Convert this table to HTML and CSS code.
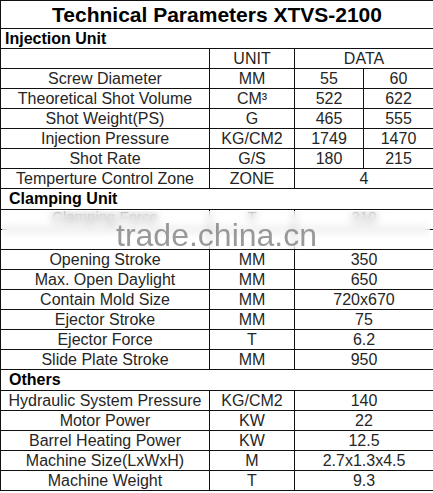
FILE: index.html
```html
<!DOCTYPE html>
<html>
<head>
<meta charset="utf-8">
<title>Technical Parameters XTVS-2100</title>
<link rel="stylesheet" href="styles.css">
</head>
<body>
<div class="sheet">
  <table class="spec">
    <colgroup>
      <col class="c-name">
      <col class="c-unit">
      <col class="c-d1">
      <col class="c-d2">
    </colgroup>
    <tbody>
      <tr class="r-title"><td colspan="4" class="title">Technical Parameters XTVS-2100</td></tr>
      <tr class="r-sec"><td colspan="4" class="sec sec-first">Injection Unit</td></tr>
      <tr><td></td><td>UNIT</td><td colspan="2">DATA</td></tr>
      <tr><td>Screw Diameter</td><td>MM</td><td>55</td><td>60</td></tr>
      <tr><td>Theoretical Shot Volume</td><td>CM³</td><td>522</td><td>622</td></tr>
      <tr><td>Shot Weight(PS)</td><td>G</td><td>465</td><td>555</td></tr>
      <tr><td>Injection Pressure</td><td>KG/CM2</td><td>1749</td><td>1470</td></tr>
      <tr><td>Shot Rate</td><td>G/S</td><td>180</td><td>215</td></tr>
      <tr><td>Temperture Control Zone</td><td>ZONE</td><td colspan="2">4</td></tr>
      <tr class="r-sec2"><td colspan="4" class="sec">Clamping Unit</td></tr>
      <tr class="r-hidden"><td>Clamping Force</td><td>T</td><td colspan="2">210</td></tr>
      <tr class="r-hidden"><td></td><td></td><td colspan="2"></td></tr>
      <tr><td>Opening Stroke</td><td>MM</td><td colspan="2">350</td></tr>
      <tr><td>Max. Open Daylight</td><td>MM</td><td colspan="2">650</td></tr>
      <tr><td>Contain Mold Size</td><td>MM</td><td colspan="2">720x670</td></tr>
      <tr><td>Ejector Stroke</td><td>MM</td><td colspan="2">75</td></tr>
      <tr><td>Ejector Force</td><td>T</td><td colspan="2">6.2</td></tr>
      <tr><td>Slide Plate Stroke</td><td>MM</td><td colspan="2">950</td></tr>
      <tr class="r-sec2"><td colspan="4" class="sec">Others</td></tr>
      <tr><td>Hydraulic System Pressure</td><td>KG/CM2</td><td colspan="2">140</td></tr>
      <tr><td>Motor Power</td><td>KW</td><td colspan="2">22</td></tr>
      <tr><td>Barrel Heating Power</td><td>KW</td><td colspan="2">12.5</td></tr>
      <tr><td>Machine Size(LxWxH)</td><td>M</td><td colspan="2">2.7x1.3x4.5</td></tr>
      <tr><td>Machine Weight</td><td>T</td><td colspan="2">9.3</td></tr>
    </tbody>
  </table>
  <div class="smudge"></div>
  <div class="watermark">trade.china.cn</div>
</div>
</body>
</html>
```

FILE: styles.css
```css
html, body {
  margin: 0;
  padding: 0;
  background: #ffffff;
}

.sheet {
  position: relative;
  width: 433px;
  height: 493px;
  overflow: hidden;
}

.spec {
  width: 433px;
  border-collapse: collapse;
  table-layout: fixed;
  font-family: "Liberation Sans", Arial, sans-serif;
  font-size: 16px;
  color: #262626;
}

.c-name { width: 209px; }
.c-unit { width: 85px; }
.c-d1 { width: 69px; }
.c-d2 { width: 70px; }

.spec td {
  border: 1px solid #111;
  height: 19px;
  padding: 0;
  text-align: center;
  vertical-align: middle;
  line-height: 18px;
  white-space: nowrap;
}

.spec .r-title td {
  height: 27px;
}

.spec td.title {
  font-size: 21px;
  font-weight: bold;
  color: #000;
  line-height: 26px;
}

.spec .r-sec2 td {
  height: 20px;
}

.spec td.sec {
  text-align: left;
  font-weight: bold;
  color: #000;
  padding-left: 8px;
}

.spec td.sec-first {
  padding-left: 4px;
}

.spec .r-hidden td {
  line-height: 14px;
  font-size: 15px;
  vertical-align: top;
}

.smudge {
  position: absolute;
  left: 2px;
  top: 211px;
  width: 428px;
  height: 38px;
  background: rgba(255, 255, 255, 0.5);
  backdrop-filter: blur(4px);
}

.watermark {
  position: absolute;
  left: 116px;
  top: 222px;
  font-family: "Liberation Sans", Arial, sans-serif;
  font-size: 32px;
  line-height: 26px;
  color: rgba(120, 120, 120, 0.75);
  white-space: nowrap;
}
```
